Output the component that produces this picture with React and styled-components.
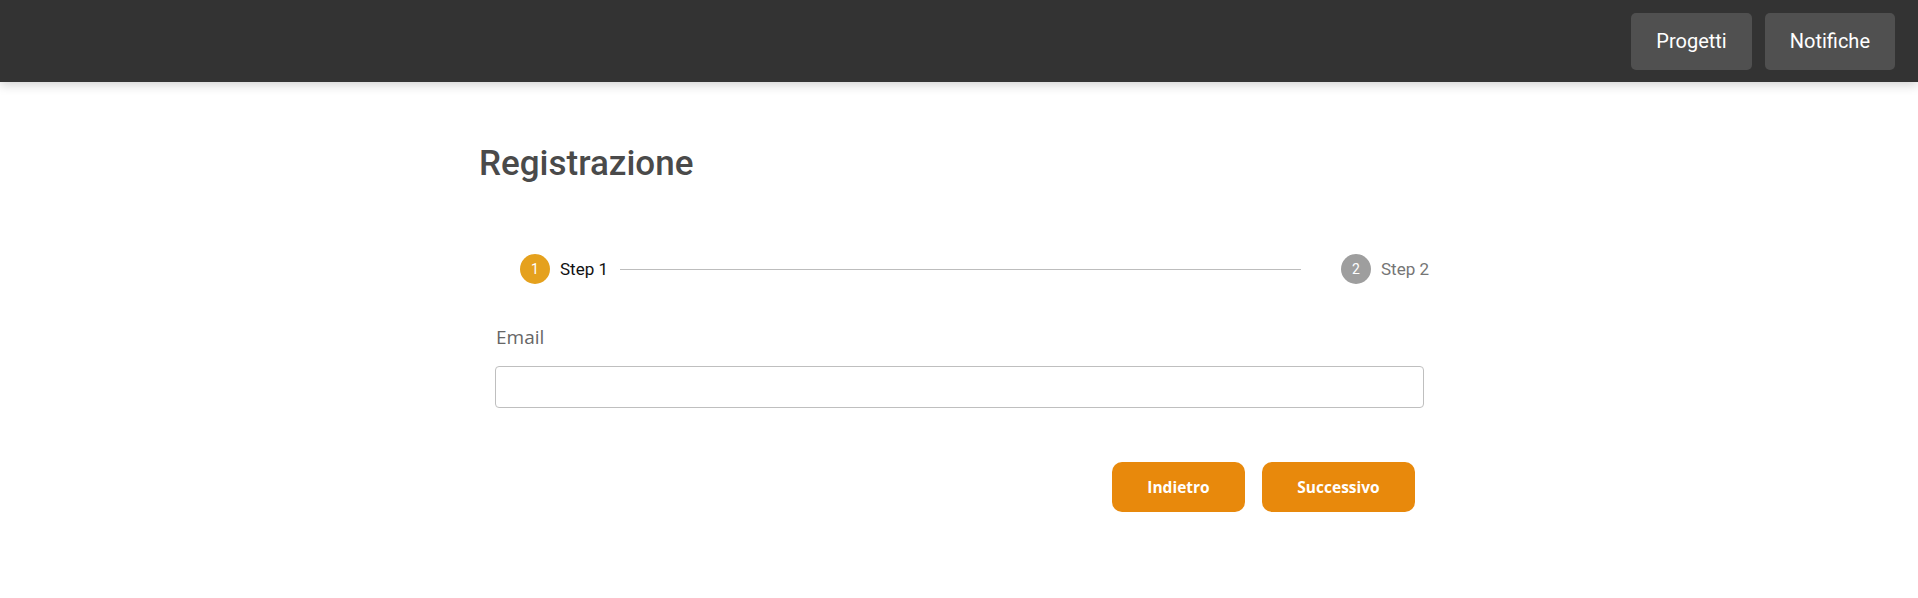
import React from 'react';
import styled, { createGlobalStyle } from 'styled-components';

const GlobalStyle = createGlobalStyle`
  body {
    margin: 0;
    background: #ffffff;
    font-family: Roboto, "Liberation Sans", sans-serif;
  }
`;

const TopBar = styled.header`
  height: 82px;
  background: #333333;
  display: flex;
  justify-content: flex-end;
  align-items: center;
  gap: 13px;
  padding-right: 23px;
  box-shadow: 0 3px 10px rgba(0, 0, 0, 0.18);
  position: relative;
`;

const NavButton = styled.button`
  height: 57px;
  padding: 0 25px;
  background: #505050;
  color: #ffffff;
  border: none;
  border-radius: 5px;
  font-family: Roboto, sans-serif;
  font-size: 20px;
  cursor: pointer;
`;

const Main = styled.main`
  width: 954px;
  margin: 0 auto;
  padding-top: 61px;
`;

const Title = styled.h1`
  margin: 0 0 0 -3px;
  font-family: Roboto, sans-serif;
  font-size: 35px;
  line-height: 41px;
  font-weight: 500;
  color: #4a4a4a;
`;

const Stepper = styled.div`
  display: flex;
  align-items: center;
  margin-top: 70px;
  padding: 0 7px 0 38px;
`;

const Step = styled.div`
  display: flex;
  align-items: center;
  gap: 10px;
`;

const StepCircle = styled.span`
  width: 30px;
  height: 30px;
  border-radius: 50%;
  background: ${({ $active }) => ($active ? '#e5a11d' : '#9e9e9e')};
  color: #ffffff;
  display: flex;
  align-items: center;
  justify-content: center;
  font-size: 14px;
`;

const StepLabel = styled.span`
  font-size: 17px;
  font-weight: 400;
  color: ${({ $active }) => ($active ? '#111111' : '#757575')};
`;

const Connector = styled.span`
  flex: 1;
  height: 1px;
  background: #bdbdbd;
  margin: 0 40px 0 12px;
`;

const Form = styled.form`
  margin: 0 12px 0 13px;
`;

const Label = styled.label`
  display: block;
  margin-top: 41px;
  padding-left: 1px;
  font-family: "Open Sans", sans-serif;
  font-size: 19px;
  line-height: 25px;
  color: #666666;
`;

const Input = styled.input`
  display: block;
  box-sizing: border-box;
  width: 100%;
  height: 42px;
  margin-top: 16px;
  border: 1px solid #bfbfbf;
  border-radius: 4px;
  padding: 0 12px;
  font-size: 16px;
  outline: none;
`;

const Actions = styled.div`
  display: flex;
  justify-content: flex-end;
  gap: 17px;
  margin-top: 54px;
  padding-right: 9px;
`;

const ActionButton = styled.button`
  height: 50px;
  width: ${({ $w }) => $w}px;
  background: #e8890c;
  color: #ffffff;
  border: none;
  border-radius: 10px;
  font-family: "Open Sans", sans-serif;
  font-size: 15.5px;
  font-weight: 700;
  cursor: pointer;
`;

export default function App() {
  return (
    <>
      <GlobalStyle />
      <TopBar>
        <NavButton>Progetti</NavButton>
        <NavButton>Notifiche</NavButton>
      </TopBar>
      <Main>
        <Title>Registrazione</Title>
        <Stepper>
          <Step>
            <StepCircle $active>1</StepCircle>
            <StepLabel $active>Step 1</StepLabel>
          </Step>
          <Connector />
          <Step>
            <StepCircle>2</StepCircle>
            <StepLabel>Step 2</StepLabel>
          </Step>
        </Stepper>
        <Form onSubmit={(e) => e.preventDefault()}>
          <Label htmlFor="email">Email</Label>
          <Input id="email" type="email" />
          <Actions>
            <ActionButton type="button" $w={133}>Indietro</ActionButton>
            <ActionButton type="submit" $w={153}>Successivo</ActionButton>
          </Actions>
        </Form>
      </Main>
    </>
  );
}
